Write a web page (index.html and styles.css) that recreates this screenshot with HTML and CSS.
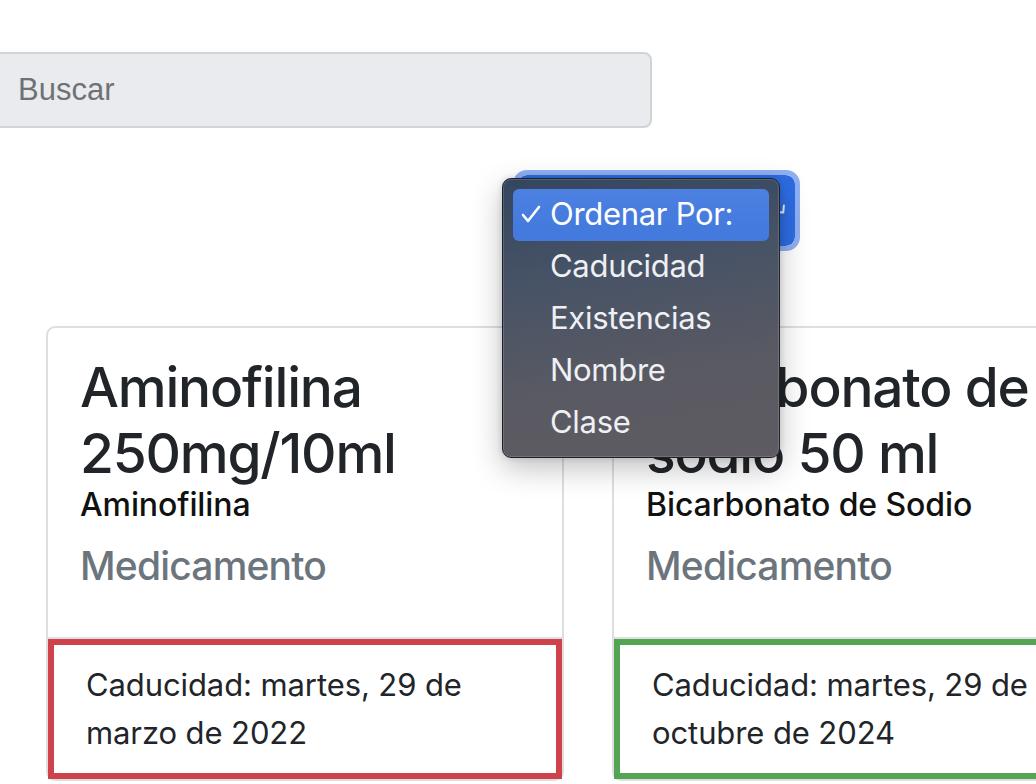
FILE: index.html
```html
<!DOCTYPE html>
<html lang="es">
<head>
<meta charset="utf-8">
<title>Inventario</title>
<link rel="stylesheet" href="styles.css">
</head>
<body>
<div class="page">
  <div class="search-row">
    <input class="search" type="text" placeholder="Buscar">
  </div>
  <div class="sort-row">
    <div class="select-btn">
      <span class="select-label">Ordenar Por:</span>
      <svg class="chev" width="14" height="10" viewBox="0 0 14 10"><polyline points="2,2 7,7 12,2" fill="none" stroke="#e8eefc" stroke-width="2" stroke-linecap="round" stroke-linejoin="round"/></svg>
    </div>
  </div>
  <div class="cards">
    <div class="card">
      <div class="card-body">
        <h3 class="card-title">Aminofilina 250mg/10ml</h3>
        <h6 class="card-subtitle">Aminofilina</h6>
        <h5 class="card-class">Medicamento</h5>
      </div>
      <div class="card-footer">
        <div class="expiry expiry-danger">Caducidad: martes, 29 de marzo de 2022</div>
      </div>
    </div>
    <div class="card">
      <div class="card-body">
        <h3 class="card-title">Bicarbonato de sodio 50 ml</h3>
        <h6 class="card-subtitle">Bicarbonato de Sodio</h6>
        <h5 class="card-class">Medicamento</h5>
      </div>
      <div class="card-footer">
        <div class="expiry expiry-success">Caducidad: martes, 29 de octubre de 2024</div>
      </div>
    </div>
  </div>
  <div class="menu">
    <div class="menu-item active">
      <svg class="check" width="20" height="18" viewBox="0 0 20 18"><polyline points="2,10 7,16 18,2" fill="none" stroke="#ffffff" stroke-width="2.6" stroke-linecap="round" stroke-linejoin="round"/></svg>
      <span>Ordenar Por:</span>
    </div>
    <div class="menu-item"><span>Caducidad</span></div>
    <div class="menu-item"><span>Existencias</span></div>
    <div class="menu-item"><span>Nombre</span></div>
    <div class="menu-item"><span>Clase</span></div>
  </div>
</div>
</body>
</html>
```
FILE: styles.css
```css
* { box-sizing: border-box; }
html, body { margin: 0; padding: 0; background: #fff; overflow: hidden; }
body {
  font-family: Inter, "Noto Sans", "DejaVu Sans", sans-serif;
  color: #212529;
  width: 1036px;
  height: 784px;
}
.page {
  position: relative;
  width: 1036px;
  height: 784px;
  overflow: hidden;
  padding-top: 52px;
}
.search-row {
  margin-left: -8px;
  width: 660px;
}
.search {
  display: block;
  width: 660px;
  height: 76px;
  background: #e9ebee;
  border: 2px solid #cfd4d9;
  border-radius: 8px;
  padding: 12px 24px;
  font-family: "Liberation Sans", Arial, sans-serif;
  font-size: 31px;
  color: #212529;
  outline: none;
}
.search::placeholder { color: #6f7275; }
.sort-row {
  margin-top: 42px;
  padding-left: 513px;
}
.select-btn {
  width: 287px;
  height: 81px;
  border: 5px solid #8fb0f3;
  border-radius: 14px;
  background: #2d6de3;
  background-clip: padding-box;
  display: flex;
  align-items: center;
  justify-content: space-between;
  padding: 0 6px 0 30px;
  color: #fff;
  font-size: 28px;
}
.select-label { visibility: hidden; }
.chev { transform: rotate(-40deg); margin-top: 0; }
.cards {
  margin-top: 75px;
  margin-left: 46px;
  display: flex;
  gap: 48px;
}
.card {
  flex: 0 0 518px;
  border: 2px solid #dfdfdf;
  border-radius: 9px;
  background: #fff;
}
.card-body {
  padding: 26px 32px 47px;
}
.card-title {
  margin: 0 0 16px;
  font-size: 55px;
  font-weight: 500;
  line-height: 66px;
  letter-spacing: -1.2px;
  color: #212529;
}
.card-subtitle {
  margin: -16px 0 0;
  font-size: 32px;
  font-weight: 500;
  line-height: 38px;
  letter-spacing: -0.1px;
  color: #111;
}
.card-class {
  margin: 18px 0 0;
  font-size: 39px;
  font-weight: 500;
  line-height: 48px;
  letter-spacing: -0.8px;
  color: #6c757d;
}
.card-footer {
  border-top: 2px solid #dfdfdf;
  margin-top: 0;
}
.expiry {
  border: 6px solid transparent;
  padding: 16px 32px;
  font-size: 31px;
  line-height: 48px;
  letter-spacing: -0.1px;
  color: #212529;
}
.expiry-danger { border-color: #ce434b; }
.expiry-success { border-color: #53a553; }
.menu {
  position: absolute;
  left: 502px;
  top: 178px;
  width: 278px;
  height: 280px;
  padding: 10px;
  border-radius: 9px;
  border: 1px solid #1f2128;
  background: linear-gradient(170deg, #34465f 0%, #485366 35%, #5a5a62 70%, #5e5b62 100%);
  box-shadow: inset 0 0 0 1px rgba(255,255,255,0.14), 0 10px 30px rgba(0,0,0,0.25), 0 0 6px rgba(0,0,0,0.15);
  font-family: Inter, "Noto Sans", sans-serif;
}
.menu-item {
  position: relative;
  height: 52px;
  padding-left: 37px;
  padding-bottom: 4px;
  display: flex;
  align-items: center;
  font-size: 31px;
  letter-spacing: -0.3px;
  color: #eef0f4;
  border-radius: 6px;
}
.menu-item.active {
  background: linear-gradient(180deg, #4c81e2, #4378dc);
  color: #fff;
}
.check {
  position: absolute;
  left: 8px;
  top: 16px;
}
```
